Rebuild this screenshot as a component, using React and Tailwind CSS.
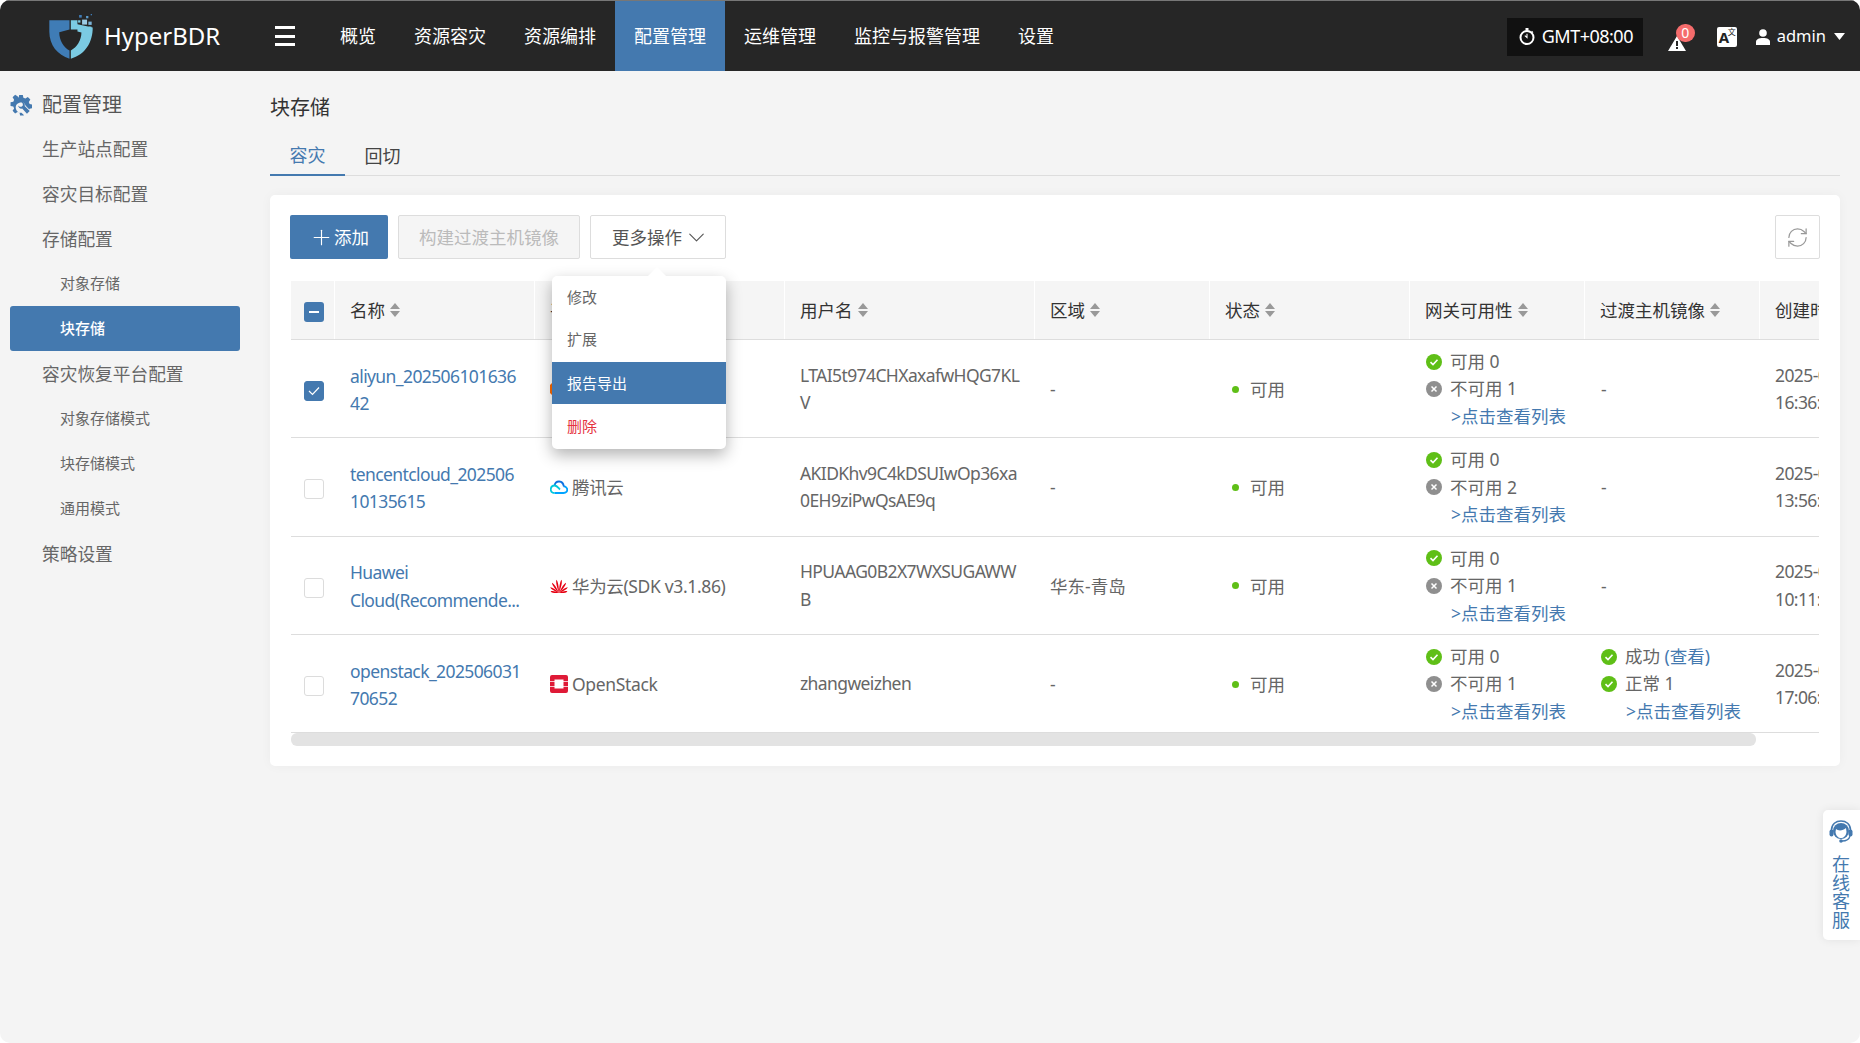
import React from "react";
import { ChevronDown, RefreshCw, Plus } from "lucide-react";

const Logo = () => (
  <svg width="48" height="48" viewBox="80 35 145 145" className="shrink-0">
    <path d="M87 60H148V88L117 96C117 120 130 142 148 151V176C112 166 87 135 87 95Z" fill="#3f7cb6" />
    <path d="M152 60H172V88L152 88ZM172 72L218 82C219 125 195 165 152 176V151C170 142 184 120 184 97L172 94Z" fill="#7bcbe3" />
    <rect x="177" y="44" width="8" height="8" fill="#3f7cb6" />
    <rect x="198" y="47" width="7" height="7" fill="#5c9ccb" />
    <rect x="212" y="41" width="4" height="4" fill="#3f7cb6" />
    <rect x="186" y="58" width="15" height="15" fill="#9ccbe4" />
    <rect x="174" y="60" width="7" height="7" fill="#7bcbe3" />
    <rect x="205" y="64" width="10" height="10" fill="#7bb3d8" />
    <rect x="206" y="79" width="8" height="8" fill="#7bcbe3" />
  </svg>
);

const Clock = () => (
  <svg width="16" height="17" viewBox="0 0 16 17" className="shrink-0">
    <rect x="6.5" y="0" width="3" height="2.5" fill="#fff" />
    <circle cx="8" cy="9.5" r="6.5" fill="none" stroke="#fff" strokeWidth="2" />
    <path d="M8 5.8V9.5L5.8 7.6M12.6 3.2l1.4 1.4" stroke="#fff" strokeWidth="1.1" fill="none" />
  </svg>
);

const Warn = () => (
  <svg width="18" height="15" viewBox="0 0 18 15" className="block">
    <path d="M9 0L18 15H0Z" fill="#fff" />
    <rect x="8" y="5" width="2" height="5" fill="#262626" />
    <rect x="8" y="11" width="2" height="2" fill="#262626" />
  </svg>
);

const User = () => (
  <svg width="14" height="16" viewBox="0 0 14 16" className="shrink-0">
    <circle cx="7" cy="4" r="3.8" fill="#fff" />
    <path d="M0 16V13C0 10.5 2.5 9 7 9S14 10.5 14 13V16Z" fill="#fff" />
  </svg>
);

const Gear = () => (
  <svg width="22" height="22" viewBox="0 0 24 24" className="shrink-0">
    <path
      d="M10 1h4l.6 3 2.2.9 2.6-1.7 2.8 2.8-1.7 2.6.9 2.2 3 .6v4l-3 .6-.3.8-4-4a5.6 5.6 0 1 0-4.6 7.6l2.6 2.6-.1.4h-4l-.6-3-2.2-.9-2.6 1.7-2.8-2.8 1.7-2.6-.9-2.2-3-.6v-4l3-.6.9-2.2-1.7-2.6 2.8-2.8 2.6 1.7L9.400 4Z"
      fill="#4479af"
    />
    <path d="M12 8.500l2 2v2l-1.500 1.500h-2L9 12.500c0 2 1.500 3.500 3.500 3.500l.8-.2 5.200 5.700 3-3-5.500-5.400.2-1c0-2-2-3.600-4-3.600Z" fill="#4479af" />
  </svg>
);

const Sort = () => (
  <svg width="10" height="14" viewBox="0 0 10 14" className="inline-block shrink-0 ml-[5px]">
    <path d="M5 0L10 6H0Z M5 14L0 8H10Z" fill="#999" />
  </svg>
);

const Ok = () => (
  <svg width="16" height="16" viewBox="0 0 16 16" className="shrink-0">
    <circle cx="8" cy="8" r="8" fill="#5fbf17" />
    <path d="M4.500 8.200L7 10.600 11.500 5.800" fill="none" stroke="#fff" strokeWidth="1.600" />
  </svg>
);

const Bad = () => (
  <svg width="16" height="16" viewBox="0 0 16 16" className="shrink-0">
    <circle cx="8" cy="8" r="8" fill="#8f8f8f" />
    <path d="M5.500 5.500L10.500 10.500M10.500 5.500L5.500 10.500" fill="none" stroke="#fff" strokeWidth="1.500" />
  </svg>
);

const Tencent = () => (
  <svg width="18" height="14" viewBox="0 0 18 14" className="shrink-0">
    <path d="M4.500 13H13.500C19 13 18 6 13.500 6.500" fill="none" stroke="#00a4ff" strokeWidth="1.800" />
    <path d="M13.800 6.500C13 0 5.500 0 4.600 5.500" fill="none" stroke="#0f72e0" strokeWidth="1.800" />
    <path d="M4.500 13C-1 13 0 5.500 4.600 5.500C7 5.500 8.500 8 10 9.500" fill="none" stroke="#00c8dc" strokeWidth="1.800" />
  </svg>
);

const petals = [
  [-80, 8.5],
  [-57, 10.5],
  [-34, 12.5],
  [-11, 13.5],
  [11, 13.5],
  [34, 12.5],
  [57, 10.5],
  [80, 8.5],
];

const Huawei = () => (
  <svg width="18" height="14" viewBox="0 0 18 14" className="shrink-0">
    {petals.map(([a, len]) => (
      <path
        key={a}
        d={`M9 14C7.900 ${14 - len * 0.5} 7.800 ${14 - len * 0.85} 9 ${14 - len}C10.200 ${14 - len * 0.85} 10.100 ${14 - len * 0.5} 9 14Z`}
        fill="#e60012"
        transform={`rotate(${a} 9 14)`}
      />
    ))}
  </svg>
);

const OpenStackIcon = () => (
  <svg width="18" height="18" viewBox="0 0 18 18" className="shrink-0">
    <path d="M2 0H16A2 2 0 0 1 18 2V6.200H13.500V4.500H4.500V6.200H0V2A2 2 0 0 1 2 0Z" fill="#df1a37" />
    <path d="M0 11.800H4.500V13.500H13.500V11.800H18V16A2 2 0 0 1 16 18H2A2 2 0 0 1 0 16Z" fill="#df1a37" />
    <rect x="0" y="7" width="4.500" height="4" fill="#df1a37" />
    <rect x="13.500" y="7" width="4.500" height="4" fill="#df1a37" />
  </svg>
);

const Aliyun = () => (
  <svg width="18" height="14" viewBox="0 0 18 14" className="shrink-0">
    <path d="M6 1H2L0 3V11L2 13H6V11L2 10V4L6 3ZM12 1H16L18 3V11L16 13H12V11L16 10V4L12 3Z" fill="#ff6a00" />
  </svg>
);

const Headset = () => (
  <svg width="24" height="24" viewBox="0 0 24 24">
    <circle cx="12" cy="11" r="8" fill="#4479af" />
    <path d="M7 9C9 11 14 11 17 8L17.500 12C17 16 14.500 18 12 18S7 16 6.500 12Z" fill="#fff" />
    <path d="M2.500 13V10C2.500 4 7 1 12 1S21.500 4 21.500 10V13" fill="none" stroke="#4479af" strokeWidth="1.600" />
    <rect x="0.500" y="9.500" width="4" height="7" rx="2" fill="#4479af" />
    <rect x="19.500" y="9.500" width="4" height="7" rx="2" fill="#4479af" />
    <path d="M21 16C20 20 17 21 13 21" fill="none" stroke="#4479af" strokeWidth="1.300" />
    <circle cx="12" cy="21" r="1.800" fill="#4479af" />
  </svg>
);

const navItems = ["概览", "资源容灾", "资源编排", "配置管理", "运维管理", "监控与报警管理", "设置"];

const side = [
  { t: "生产站点配置", k: "l2", h: "h-[45px]" },
  { t: "容灾目标配置", k: "l2", h: "h-[45px]" },
  { t: "存储配置", k: "l2", h: "h-[45px]" },
  { t: "对象存储", k: "l3", h: "h-[44px]" },
  { t: "块存储", k: "active", h: "h-[45px]" },
  { t: "容灾恢复平台配置", k: "l2", h: "h-[46px]" },
  { t: "对象存储模式", k: "l3", h: "h-[45px]" },
  { t: "块存储模式", k: "l3", h: "h-[45px]" },
  { t: "通用模式", k: "l3", h: "h-[45px]" },
  { t: "策略设置", k: "l2", h: "h-[45px]" },
];

const cols = "grid grid-cols-[44px_200px_250px_250px_175px_200px_175px_175px_200px] w-[1669px]";

const heads = ["名称", "平台类型", "用户名", "区域", "状态", "网关可用性", "过渡主机镜像", "创建时间"];

const rows = [
  {
    name: ["aliyun_202506101636", "42"],
    icon: <Aliyun />,
    plat: "阿里云",
    user: ["LTAI5t974CHXaxafwHQG7KL", "V"],
    region: "-",
    bad: 1,
    time: ["2025-06-10", "16:36:42"],
    checked: true,
  },
  {
    name: ["tencentcloud_202506", "10135615"],
    icon: <Tencent />,
    plat: "腾讯云",
    user: ["AKIDKhv9C4kDSUIwOp36xa", "0EH9ziPwQsAE9q"],
    region: "-",
    bad: 2,
    time: ["2025-06-10", "13:56:15"],
  },
  {
    name: ["Huawei", "Cloud(Recommende..."],
    icon: <Huawei />,
    plat: "华为云(SDK v3.1.86)",
    user: ["HPUAAG0B2X7WXSUGAWW", "B"],
    region: "华东-青岛",
    bad: 1,
    time: ["2025-06-10", "10:11:20"],
  },
  {
    name: ["openstack_202506031", "70652"],
    icon: <OpenStackIcon />,
    plat: "OpenStack",
    user: ["zhangweizhen"],
    region: "-",
    bad: 1,
    time: ["2025-06-03", "17:06:52"],
    image: true,
  },
];

const Lines = ({ lines, className = "" }) => (
  <div className={`leading-[27.6px] whitespace-nowrap tracking-[-0.6px] ${className}`}>
    {lines.map((l) => (
      <div key={l}>{l}</div>
    ))}
  </div>
);

const Box = ({ checked }) => (
  <span
    className={`flex items-center justify-center w-[20px] h-[20px] rounded-[3px] border ${
      checked ? "bg-[#4479af] border-[#4479af]" : "bg-white border-[#dcdcdc]"
    }`}
  >
    {checked && (
      <svg width="12" height="10" viewBox="0 0 12 10">
        <path d="M1 5L4.500 8.500L11 1.500" fill="none" stroke="#fff" strokeWidth="1.200" />
      </svg>
    )}
  </span>
);

const Cell = ({ children, className = "" }) => (
  <div className={`flex items-center px-[15px] pt-[1px] min-w-0 ${className}`}>{children}</div>
);

const ListLink = ({ className = "" }) => (
  <div className={`text-[#4479af] whitespace-nowrap ${className}`}>&gt;点击查看列表</div>
);

export default function App() {
  return (
    <div className="relative w-[1860px] h-[1043px] bg-white overflow-hidden font-['Noto_Sans','Noto_Sans_CJK_SC',sans-serif]">
      <div className="w-full h-full flex flex-col rounded-[10px] overflow-hidden bg-[#f4f4f4]">
        {/* top bar */}
        <header className="h-[71px] shrink-0 flex items-stretch bg-[#262626] border-t border-[#777] text-white">
          <div className="w-[275px] flex items-center shrink-0 pl-[47px]">
            <Logo />
            <span className="ml-[9px] -mt-[1px] text-[24px] leading-none">HyperBDR</span>
          </div>
          <div className="w-[46px] shrink-0 flex items-center">
            <div className="w-[20px] h-[20px] flex flex-col justify-between">
              <span className="h-[3px] bg-white" />
              <span className="h-[3px] bg-white" />
              <span className="h-[3px] bg-white" />
            </div>
          </div>
          <nav className="flex items-stretch text-[18px]">
            {navItems.map((n) => (
              <div
                key={n}
                className={`flex items-center px-[19px] pt-[1px] ${n === "配置管理" ? "bg-[#4479af]" : ""}`}
              >
                {n}
              </div>
            ))}
          </nav>
          <div className="ml-auto flex items-center pr-[15px] pt-[1px]">
            <div className="w-[136px] h-[38px] bg-[#111] flex items-center pl-[12px] gap-[7px] text-[18px] tracking-[-0.5px]">
              <Clock />
              GMT+08:00
            </div>
            <div className="relative ml-[25px] w-[18px] h-[15px] mt-[13px]">
              <Warn />
              <span className="absolute left-[8px] top-[-12px] w-[19px] h-[18px] rounded-full bg-[#f56c6c] text-white text-[14px] leading-[17px] text-center">
                0
              </span>
            </div>
            <div className="relative ml-[31px] w-[20px] h-[20px] rounded-[2px] bg-white text-[#222]">
              <span className="absolute left-[2px] top-[3px] text-[15px] leading-[15px] font-bold">A</span>
              <span className="absolute right-[1px] top-[1px] text-[8px] leading-[8px]">文</span>
            </div>
            <div className="ml-[19px]">
              <User />
            </div>
            <span className="ml-[7px] text-[16.5px] leading-none">admin</span>
            <svg width="11" height="7" viewBox="0 0 11 7" className="ml-[8px]">
              <path d="M0 0H11L5.500 7Z" fill="#fff" />
            </svg>
          </div>
        </header>

        <div className="flex-1 flex min-h-0">
          {/* sidebar */}
          <aside className="w-[270px] shrink-0 pt-[11px] text-[#666]">
            <div className="h-[45px] flex items-center pl-[10px] gap-[10px] text-[20px] text-[#555]">
              <Gear />
              配置管理
            </div>
            {side.map((s) =>
              s.k === "l2" ? (
                <div key={s.t} className={`${s.h} flex items-center pl-[42px] text-[17.7px]`}>
                  {s.t}
                </div>
              ) : s.k === "l3" ? (
                <div key={s.t} className={`${s.h} flex items-center pl-[60px] pb-[2px] text-[15px]`}>
                  {s.t}
                </div>
              ) : (
                <div
                  key={s.t}
                  className={`${s.h} w-[230px] ml-[10px] flex items-center pl-[50px] text-[15px] font-medium text-white bg-[#4479af] rounded-[3px]`}
                >
                  {s.t}
                </div>
              ),
            )}
          </aside>

          {/* main */}
          <main className="w-[1570px] pt-[23px]">
            <h1 className="text-[20px] leading-[28px] text-[#333] font-normal">块存储</h1>
            <div className="mt-[15px] h-[39px] flex border-b border-[#ddd] text-[18px]">
              <div className="w-[75px] h-[39px] flex items-center justify-center border-b-[2px] border-[#4479af] text-[#4479af]">
                容灾
              </div>
              <div className="w-[75px] h-[39px] flex items-center justify-center text-[#444]">回切</div>
            </div>

            <section className="mt-[19px] h-[571px] bg-white rounded-[5px] px-[20px] pt-[20px] shadow-[0_0_12px_rgba(0,0,0,0.04)]">
              <div className="flex items-center h-[44px] text-[17.5px]">
                <div className="w-[98px] h-[44px] flex items-center justify-center bg-[#4479af] text-white rounded-[2px]">
                  <Plus size={25} strokeWidth={1.1} />
                  添加
                </div>
                <div className="ml-[10px] w-[182px] h-[44px] flex items-center justify-center bg-[#f5f5f5] border border-[#ddd] rounded-[2px] text-[#bbb]">
                  构建过渡主机镜像
                </div>
                <div className="ml-[10px] w-[136px] h-[44px] flex items-center pl-[21px] bg-white border border-[#ddd] rounded-[2px] text-[#555]">
                  更多操作
                  <ChevronDown size={27} strokeWidth={1} className="ml-[1px]" />
                </div>
                <div className="ml-auto w-[45px] h-[44px] flex items-center justify-center border border-[#ddd] rounded-[2px] text-[#999]">
                  <RefreshCw size={23} strokeWidth={1.3} />
                </div>
              </div>

              <div className="mt-[22px] mx-px overflow-hidden text-[17.5px] text-[#666]">
                <div className={`${cols} h-[59px] bg-[#f5f5f5] border-b border-[#ddd] text-[#333]`}>
                  <div className="flex items-center pl-[13px] pt-[3px] border-r border-white">
                    <span className="flex items-center justify-center w-[20px] h-[20px] rounded-[3px] bg-[#4479af]">
                      <span className="w-[10px] h-[2px] bg-white" />
                    </span>
                  </div>
                  {heads.map((h) => (
                    <div key={h} className="flex items-center px-[15px] min-w-0 border-r border-white whitespace-nowrap">
                      {h}
                      <Sort />
                    </div>
                  ))}
                </div>

                {rows.map((r) => (
                  <div key={r.plat} className={`${cols} h-[98.33px] border-b border-[#ddd]`}>
                    <div className="flex items-center pl-[13px] pt-[5px]">
                      <Box checked={r.checked} />
                    </div>
                    <Cell className="pt-[3px]">
                      <Lines lines={r.name} className="text-[#4479af]" />
                    </Cell>
                    <Cell className="gap-[4px] whitespace-nowrap tracking-[-0.35px]">
                      {r.icon}
                      {r.plat}
                    </Cell>
                    <Cell>
                      <Lines lines={r.user} />
                    </Cell>
                    <Cell>{r.region}</Cell>
                    <Cell>
                      <span className="w-[7px] h-[7px] rounded-full bg-[#5fbf17] ml-[7px] mr-[11px]" />
                      可用
                    </Cell>
                    <Cell className="pl-[16px]">
                      <div className="leading-[27.5px] whitespace-nowrap">
                        <div className="flex items-center gap-[8px]">
                          <Ok />
                          可用 0
                        </div>
                        <div className="flex items-center gap-[8px]">
                          <Bad />
                          不可用 {r.bad}
                        </div>
                        <ListLink className="pl-[25px]" />
                      </div>
                    </Cell>
                    <Cell className="pl-[16px]">
                      {r.image ? (
                        <div className="leading-[27.5px] whitespace-nowrap">
                          <div className="flex items-center gap-[8px]">
                            <Ok />
                            <span>
                              成功 <span className="text-[#4479af]">(查看)</span>
                            </span>
                          </div>
                          <div className="flex items-center gap-[8px]">
                            <Ok />
                            正常 1
                          </div>
                          <ListLink className="pl-[25px]" />
                        </div>
                      ) : (
                        "-"
                      )}
                    </Cell>
                    <Cell>
                      <Lines lines={r.time} className="tracking-[-0.3px]" />
                    </Cell>
                  </div>
                ))}

                <div className="h-[13px] w-[1465px] rounded-[6px] bg-[#e3e3e3]" />
              </div>
            </section>
          </main>
        </div>
      </div>

      {/* dropdown menu */}
      <div className="absolute left-[552px] top-[276px] w-[174px] h-[173px] bg-white rounded-[5px] shadow-[0_6px_16px_rgba(0,0,0,0.3)] text-[15px] text-[#666]">
        <span className="absolute left-[96px] top-[-9px] w-0 h-0 border-x-[9px] border-x-transparent border-b-[9px] border-b-white" />
        <div className="h-[43px] flex items-center pl-[15px]">修改</div>
        <div className="h-[41px] flex items-center pl-[15px]">扩展</div>
        <div className="mt-[2px] h-[42px] flex items-center pl-[15px] bg-[#4479af] text-white">报告导出</div>
        <div className="h-[45px] flex items-center pl-[15px] text-[#e5323e]">删除</div>
      </div>

      {/* support widget */}
      <div className="absolute right-0 top-[810px] w-[37px] h-[130px] bg-white rounded-l-[5px] shadow-[0_0_10px_rgba(0,0,0,0.08)] flex flex-col items-center pt-[10px] pr-[1px] text-[#4479af] text-[18px] leading-[18.5px]">
        <Headset />
        <div className="mt-[11px] w-[18px] text-center">在线客服</div>
      </div>
    </div>
  );
}
